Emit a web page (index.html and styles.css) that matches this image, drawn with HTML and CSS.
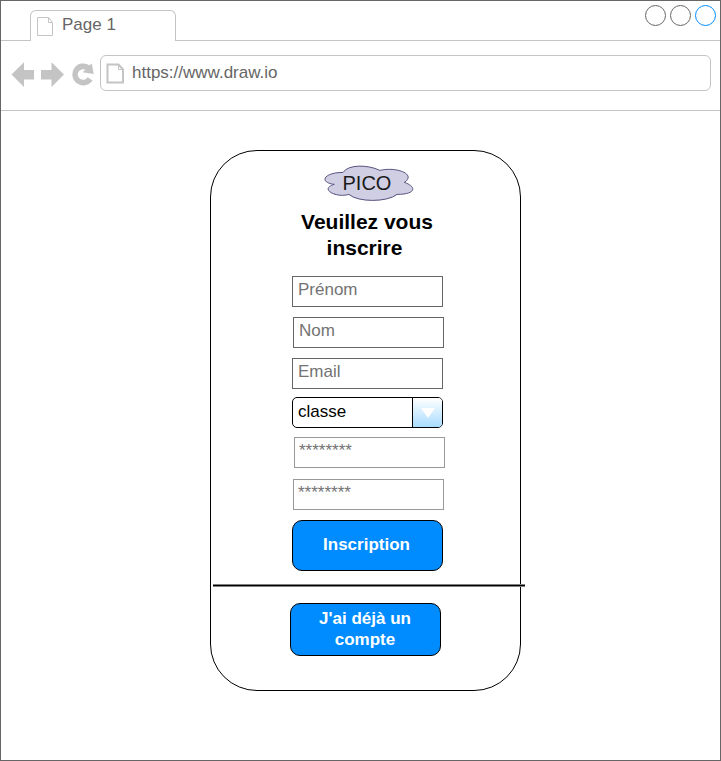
FILE: index.html
```html
<!DOCTYPE html>
<html lang="fr">
<head>
<meta charset="utf-8">
<title>PICO</title>
<link rel="stylesheet" href="styles.css">
</head>
<body>
<div class="window">
  <header class="tabbar">
    <div class="tab">
      <svg class="tab-icon" width="17" height="19" viewBox="0 0 17 19"><path d="M.5.5h11l4 5v13H.5zM11.5.5v5h4" fill="#fff" stroke="#c4c4c4"/></svg>
      <span>Page 1</span>
    </div>
    <div class="controls"><i></i><i></i><i class="active"></i></div>
  </header>
  <nav class="toolbar">
    <svg class="nav-icons" width="88" height="30" viewBox="0 0 88 30" fill="#c4c4c4">
      <path d="M.5 14.500 13 2.200V10h10v9.500H13v7.500z"/>
      <path d="M53 14.500 40.500 2.200V10H30v9.500h10.500v7.500z"/>
      <path d="M81.500 20.500A11 11 0 1 1 78.500 5.300L80.800 3.500 82.700 14 71.500 12.300 74.500 9.800A5.300 5.300 0 1 0 76.600 17.300z"/>
    </svg>
    <div class="address">
      <svg width="19" height="21" viewBox="0 0 19 21"><path d="M1.500 1.500h11l4.500 5v13H1.500z" fill="#fff" stroke="#c4c4c4" stroke-width="2"/><path d="M12.500 1.500v5H17" fill="none" stroke="#c4c4c4"/></svg>
      <span>https://www.draw.io</span>
    </div>
  </nav>
  <main class="card">
    <div class="logo">
      <svg width="100" height="40" viewBox="0 0 100 40"><path transform="translate(1.600 .4) scale(.98 1)" d="M25 10C5 10 0 20 16 22C0 26.400 18 36 31 32C40 40 70 40 80 32C100 32 100 24 87.500 20C100 12 80 4 62.500 8C50 2 30 2 25 10Z" fill="#d0cee2" stroke="#56517e"/></svg>
      <span>PICO</span>
    </div>
    <h1><span>Veuillez vous</span><br>inscrire</h1>
    <form class="form">
      <div class="field">Prénom</div>
      <div class="field shift">Nom</div>
      <div class="field">Email</div>
      <div class="select"><span>classe</span><b><svg width="14" height="10" viewBox="0 0 14 10"><path d="M0 0h14L7 10z" fill="#fff"/></svg></b></div>
      <div class="field password first">********</div>
      <div class="field password shift">********</div>
      <button type="button" class="button">Inscription</button>
    </form>
    <div class="divider"></div>
    <button type="button" class="button account">J'ai déjà un<br>compte</button>
  </main>
</div>
</body>
</html>
```
FILE: styles.css
```css
* { box-sizing: border-box; }
body {
  margin: 0;
  background: #fff;
  font: 17px/20px "Liberation Sans", Arial, sans-serif;
  color: #666;
}
svg { display: block; flex: none; }
.window {
  width: 721px;
  height: 761px;
  border: 1px solid #666;
  overflow: hidden;
}
.tabbar {
  height: 40px;
  border-bottom: 1px solid #c4c4c4;
  display: flex;
  justify-content: space-between;
}
.tab {
  width: 146px;
  height: 31px;
  margin: 9px 0 0 29px;
  padding: 4px 0 0 6px;
  background: #fff;
  border: 1px solid #c4c4c4;
  border-bottom: 0;
  border-radius: 6px 6px 0 0;
  display: flex;
  gap: 8px;
}
.tab-icon { margin-top: 2px; }
.controls { display: flex; gap: 4px; padding: 4px 4px 0 0; }
.controls i {
  width: 21px;
  height: 21px;
  border: 1px solid #666;
  border-radius: 50%;
}
.controls .active { border-color: #008cff; }
.toolbar {
  height: 70px;
  border-bottom: 1px solid #c4c4c4;
  padding: 14px 9px 0 10px;
  display: flex;
}
.nav-icons { margin-top: 5px; }
.address {
  width: 611px;
  height: 36px;
  margin-left: 1px;
  padding: 7px 0 0 5px;
  border: 1px solid #c4c4c4;
  border-radius: 6px;
  display: flex;
  gap: 7px;
}
.card {
  width: 311px;
  height: 541px;
  margin: 39px 0 0 209px;
  border: 1px solid #000;
  border-radius: 47px;
  color: #000;
}
.logo {
  width: 100px;
  height: 40px;
  margin: 11px 0 0 106px;
  display: grid;
}
.logo > * { grid-area: 1 / 1; }
.logo span {
  font-size: 20px;
  line-height: 42px;
  height: 40px;
  padding-left: 25.500px;
  color: #1a1a1a;
}
h1 {
  margin: 7px 0 0;
  padding-right: 2px;
  font-size: 21px;
  line-height: 26px;
  text-align: center;
}
h1 span { padding-left: 5px; }
.form { margin: 15px 0 0 81px; width: 154px; }
.field {
  width: 151px;
  height: 31px;
  margin-bottom: 10px;
  padding: 3px 5px;
  border: 1px solid #666;
  color: #737373;
}
.field.shift { margin-left: 1px; }
.select {
  width: 151px;
  height: 31px;
  margin-top: -2px;
  border: 1px solid #000;
  border-radius: 5px;
  display: flex;
  justify-content: space-between;
  overflow: hidden;
}
.select span { padding: 4px 5px; }
.select b {
  width: 30px;
  border-left: 1px solid #000;
  background: linear-gradient(#fff, #a8dcff);
  display: grid;
  place-items: center;
}
.password { border-color: #999; padding: 3px 4px; }
.password.first { margin: 9px 0 11px 2px; }
.button {
  display: block;
  width: 151px;
  height: 51px;
  padding: 0 2px 2px 0;
  border: 1px solid #000;
  border-radius: 10px;
  background: #008cff;
  color: #fff;
  font: bold 17px/21px "Liberation Sans", Arial, sans-serif;
}
.divider {
  width: 312px;
  height: 3px;
  margin: 13px 0 0 2px;
  border: solid #808080;
  border-width: 1px 0;
  background: #000;
}
.account { height: 53px; margin: 16px 0 0 79px; padding-right: 1px; }
```
